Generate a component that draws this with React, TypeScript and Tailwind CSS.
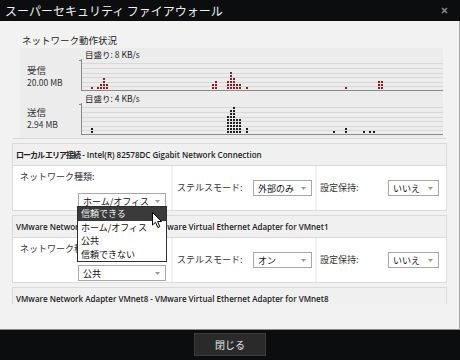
import React from "react";

const jp = "font-['Noto_Sans_CJK_JP',sans-serif]";

// [x offset from axis, dot count]
const recv: [number, number][] = [
  [10, 1], [16, 1], [19, 2], [22, 4], [25, 2],
  [131, 2], [134, 3],
  [146, 3], [149, 6], [152, 4], [155, 2], [158, 2], [165, 1],
  [264, 1], [297, 3], [300, 3],
];
const sent: [number, number][] = [
  [10, 2],
  [146, 6], [149, 8], [152, 9], [155, 5], [158, 5], [165, 2],
  [252, 1], [264, 2], [282, 1], [288, 1], [292, 1],
];

function Chart({ cols, color }: { cols: [number, number][]; color: string }) {
  const grid = [4, 9, 14, 18, 23, 27];
  return (
    <svg width="364" height="32" className="block">
      {grid.map((y) => (
        <rect key={y} x={3} y={y} width={361} height={1} fill="#d8d8d8" />
      ))}
      <rect x={0} y={1} width={2} height={1} fill="#8a8a8a" />
      <rect x={2} y={0} width={1} height={32} fill="#8a8a8a" />
      <rect x={2} y={31} width={362} height={1} fill="#8a8a8a" />
      {cols.flatMap(([x, h]) =>
        Array.from({ length: h }, (_, r) => (
          <rect key={`${x}-${r}`} x={x + 2} y={28 - 3 * r} width={2} height={2} fill={color} />
        ))
      )}
    </svg>
  );
}

function Select({ value, className = "" }: { value: string; className?: string }) {
  return (
    <div
      className={`flex h-[16px] items-center justify-between border border-[#a8a8a8] bg-white pl-[4px] pr-[5px] ${className}`}
    >
      <span className={`${jp} text-[9px] leading-none text-[#111]`}>{value}</span>
      <svg width="5" height="3">
        <path d="M0 0 H5 L2.5 3 Z" fill="#9a9a9a" />
      </svg>
    </div>
  );
}

function Menu() {
  const items = ["信頼できる", "ホーム/オフィス", "公共", "信頼できない"];
  return (
    <div className="absolute left-[-1px] top-[13px] z-10 w-[90px] border border-[#2e2e2e] bg-white">
      {items.map((t, i) => (
        <div
          key={t}
          className={`${jp} flex h-[13.5px] items-center pl-[3px] text-[9px] leading-none ${
            i === 0 ? "bg-[#3a3a3a] text-[#f2f2f2]" : "text-[#111]"
          }`}
        >
          {t}
        </div>
      ))}
      <svg width="11" height="17" className="absolute left-[74px] top-[5px]">
        <path
          d="M0.5 0.5 V13 L3.5 10.2 L5.8 15.5 L7.8 14.6 L5.6 9.5 H9.5 Z"
          fill="#fff"
          stroke="#000"
          strokeWidth="1"
          strokeLinejoin="round"
        />
      </svg>
    </div>
  );
}

function Section({
  name,
  desc,
  type,
  stealth,
  local = false,
  open = false,
}: {
  name: string;
  desc: string;
  type: string;
  stealth: string;
  local?: boolean;
  open?: boolean;
}) {
  return (
    <div className="shrink-0 border border-[#dadada] bg-[#f0f0f0]">
      <div className="flex h-[22px] items-center border-b border-[#dadada] px-[3px] font-['Open_Sans','Noto_Sans_CJK_JP',sans-serif] text-[8px] font-semibold text-[#222] whitespace-nowrap">
        <span className={local ? "font-bold tracking-[-1px]" : ""}>{name}</span>
        <span>&nbsp;- {desc}</span>
      </div>
      <div className="grid h-[44px] grid-cols-[158px_142px_1fr] gap-x-[2px]">
        <div className="bg-white pl-[7px] pt-[5px]">
          <div className={`${jp} text-[9px] leading-[11px] text-[#333]`}>ネットワーク種類:</div>
          <div className="relative ml-[58px] mt-[11px] w-[88px]">
            <Select value={type} />
            {open && <Menu />}
          </div>
        </div>
        <div className="flex items-center bg-white pl-[4px]">
          <span className={`${jp} w-[76px] text-[9px] text-[#333]`}>ステルスモード:</span>
          <Select value={stealth} className="w-[59px]" />
        </div>
        <div className="flex items-center bg-white pl-[3px]">
          <span className={`${jp} w-[68px] text-[9px] text-[#333]`}>設定保持:</span>
          <Select value="いいえ" className="w-[51px]" />
        </div>
      </div>
    </div>
  );
}

export default function App() {
  return (
    <div className="flex h-[360px] w-[460px] flex-col overflow-hidden bg-[#0c0d0f]">
      <div className="flex h-[21px] shrink-0 items-center justify-between bg-[#0c0d0f] pl-[5px] pr-[12px]">
        <span className={`${jp} text-[12px] leading-none text-[#f0f0f0]`}>スーパーセキュリティ ファイアウォール</span>
        <svg width="7" height="7">
          <path d="M1 1 L6 6 M6 1 L1 6" stroke="#8a8a8a" strokeWidth="1.5" />
        </svg>
      </div>

      <div className="flex flex-1 flex-col border-r border-[#a0a0a0] bg-[#f2f2f2]">
        <div className={`${jp} pl-[22px] pt-[12px] text-[9.5px] leading-[14px] text-[#222]`}>ネットワーク動作状況</div>

        <div className="mx-[20px] mt-[1px] h-[89px] w-[423px] bg-[#ececec]">
          <div className="flex h-[44px]">
            <div className={`${jp} w-[59px] pl-[7px] pt-[16px] text-[#333]`}>
              <div className="text-[9.5px] leading-[12px]">受信</div>
              <div className="text-[8.5px] leading-[12px]">20.00 MB</div>
            </div>
            <div className="pt-[2px]">
              <div className={`${jp} h-[9px] pl-[6px] text-[8.5px] leading-[9px] text-[#222]`}>目盛り: 8 KB/s</div>
              <Chart cols={recv} color="#8f1c1c" />
            </div>
          </div>
          <div className="flex h-[45px]">
            <div className={`${jp} w-[59px] pl-[7px] pt-[14px] text-[#333]`}>
              <div className="text-[9.5px] leading-[12px]">送信</div>
              <div className="text-[8.5px] leading-[12px]">2.94 MB</div>
            </div>
            <div className="pt-[2px]">
              <div className={`${jp} h-[9px] pl-[6px] text-[8.5px] leading-[9px] text-[#222]`}>目盛り: 4 KB/s</div>
              <Chart cols={sent} color="#1e1e1e" />
            </div>
          </div>
        </div>

        <div className="mx-[13px] mt-[1px] border-t border-[#d4d4d4]" />

        <div className="mx-[12px] mt-[4px] flex h-[161px] flex-col gap-[4px] overflow-hidden">
          <Section
            name="ローカル エリア接続"
            desc="Intel(R) 82578DC Gigabit Network Connection"
            type="ホーム/オフィス"
            stealth="外部のみ"
            local
            open
          />
          <Section
            name="VMware Network Adapter VMnet1"
            desc="VMware Virtual Ethernet Adapter for VMnet1"
            type="公共"
            stealth="オン"
          />
          <Section
            name="VMware Network Adapter VMnet8"
            desc="VMware Virtual Ethernet Adapter for VMnet8"
            type="公共"
            stealth="オン"
          />
        </div>
      </div>

      <div className="flex h-[31px] shrink-0 items-center justify-center border-t border-[#8c8c8c] bg-[#0c0d0f] pb-[1px]">
        <div
          className={`${jp} flex h-[23px] w-[72px] items-center justify-center border border-[#3c3c3c] bg-[#2a2a2a] text-[10px] text-[#e6e6e6]`}
        >
          閉じる
        </div>
      </div>
    </div>
  );
}
